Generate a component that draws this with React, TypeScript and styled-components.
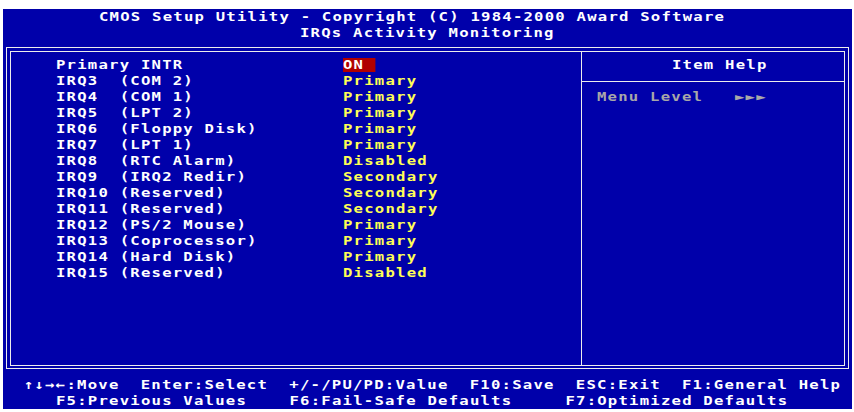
import { FC, ReactNode } from "react";
import styled, { createGlobalStyle } from "styled-components";

// one text cell of the 80x25 screen, stretched to the 849px wide picture
const CH = 849 / 80;
const ROW = 16;
const FONT = 13;
const STRETCH = 1.2;

const GlobalStyle = createGlobalStyle`
  html, body {
    margin: 0;
    padding: 0;
    background: #ffffff;
  }
`;

type Setting = {
    label: string;
    value: string;
    active?: boolean;
};

const settings: Setting[] = [
    { label: "Primary INTR", value: "ON ", active: true },
    { label: "IRQ3  (COM 2)", value: "Primary" },
    { label: "IRQ4  (COM 1)", value: "Primary" },
    { label: "IRQ5  (LPT 2)", value: "Primary" },
    { label: "IRQ6  (Floppy Disk)", value: "Primary" },
    { label: "IRQ7  (LPT 1)", value: "Primary" },
    { label: "IRQ8  (RTC Alarm)", value: "Disabled" },
    { label: "IRQ9  (IRQ2 Redir)", value: "Secondary" },
    { label: "IRQ10 (Reserved)", value: "Secondary" },
    { label: "IRQ11 (Reserved)", value: "Secondary" },
    { label: "IRQ12 (PS/2 Mouse)", value: "Primary" },
    { label: "IRQ13 (Coprocessor)", value: "Primary" },
    { label: "IRQ14 (Hard Disk)", value: "Primary" },
    { label: "IRQ15 (Reserved)", value: "Disabled" },
];

// wide bitmap-like characters: real text, stretched sideways
const Txt: FC<{ children: ReactNode; $hl?: boolean }> = ({ children, $hl }) => (
    <Cells $hl={$hl}>{children}</Cells>
);

const App: FC = () => {
    return (
        <>
            <GlobalStyle />
            <Screen>
                <TextLine $col={9}><Txt>CMOS Setup Utility - Copyright (C) 1984-2000 Award Software</Txt></TextLine>
                <TextLine $col={28}><Txt>IRQs Activity Monitoring</Txt></TextLine>

                <OuterFrame>
                    <InnerFrame>
                        <ListPanel>
                            {settings.map((s) => (
                                <SettingRow key={s.label}>
                                    <Label><Txt>{s.label}</Txt></Label>
                                    <Value><Txt $hl={s.active}>{s.value}</Txt></Value>
                                </SettingRow>
                            ))}
                        </ListPanel>
                        <HelpPanel>
                            <HelpTitle><Txt>Item Help</Txt></HelpTitle>
                            <HelpBody><Txt>Menu Level   ►►►</Txt></HelpBody>
                        </HelpPanel>
                    </InnerFrame>
                </OuterFrame>

                <Footer>
                    <TextLine $col={2}><Txt>↑↓→←:Move  Enter:Select  +/-/PU/PD:Value  F10:Save  ESC:Exit  F1:General Help</Txt></TextLine>
                    <TextLine $col={5}><Txt>F5:Previous Values    F6:Fail-Safe Defaults     F7:Optimized Defaults</Txt></TextLine>
                </Footer>
            </Screen>
        </>
    );
};

const Screen = styled.div`
    display: flex;
    flex-direction: column;
    box-sizing: border-box;
    width: 849px;
    height: 400px;
    margin: 9px 0 0 3px;
    overflow: hidden;

    background: #0000aa;
    color: #ffffff;
    font-family: "DejaVu Sans Mono", "Liberation Mono", monospace;
    font-weight: 700;
    font-size: ${FONT}px;
    line-height: ${ROW}px;
    white-space: pre;
`;

const Cells = styled.span<{ $hl?: boolean }>`
    display: inline-block;
    transform: scaleX(${STRETCH});
    transform-origin: 0 50%;
    letter-spacing: ${CH / STRETCH - FONT * 0.60205}px;
    ${(p) => p.$hl && `
        color: #ffffff;
        background: #b00000;
        line-height: 14px;
    `}
`;

const TextLine = styled.div<{ $col: number }>`
    height: ${ROW}px;
    padding-left: ${(p) => p.$col * CH}px;
`;

/* double line box: two thin frames with a small gap */
const OuterFrame = styled.div`
    box-sizing: border-box;
    height: 322px;
    margin: 6px 3px 0 3px;
    padding: 3px 3px 2px 3px;
    border: 1px solid #ececec;
`;

const InnerFrame = styled.div`
    display: flex;
    box-sizing: border-box;
    height: 100%;
    border: 1px solid #ececec;
`;

const ListPanel = styled.div`
    box-sizing: border-box;
    flex: none;
    width: 570px;
    padding-top: 5px;
    padding-left: ${5 * CH - 8}px;
`;

const SettingRow = styled.div`
    display: flex;
    align-items: center;
    height: ${ROW}px;
`;

const Label = styled.span`
    flex: none;
    width: ${27 * CH}px;
`;

const Value = styled.span`
    color: #ffff55;
`;

const HelpPanel = styled.div`
    flex: 1;
    border-left: 1px solid #ececec;
`;

const HelpTitle = styled.div`
    padding: 5px 0 8px ${63 * CH - 579}px;
    border-bottom: 1px solid #ececec;
`;

const HelpBody = styled.div`
    padding: 7px 0 0 ${56 * CH - 579}px;
    color: #a8a8a8;
`;

const Footer = styled.div`
    margin-top: 8px;
`;

export default App;
